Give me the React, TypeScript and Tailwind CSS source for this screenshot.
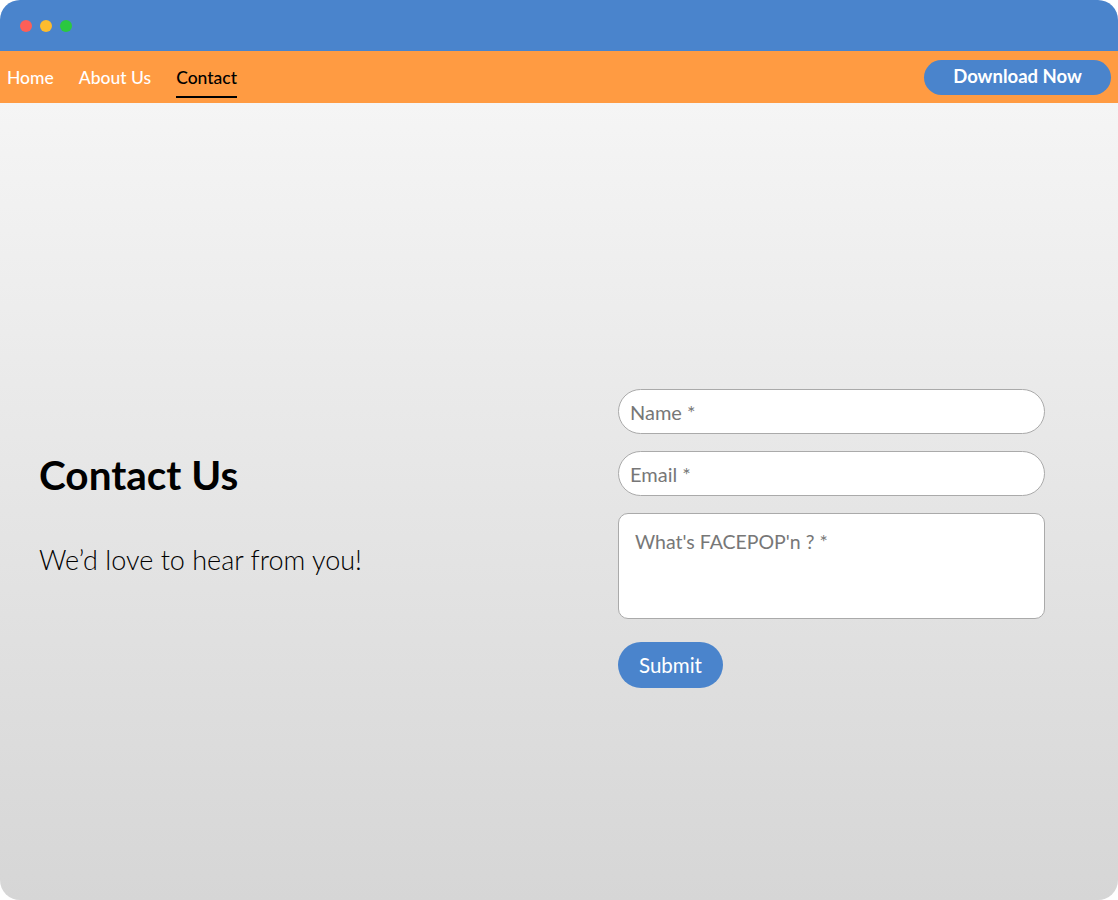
import React from 'react';

const font = { fontFamily: 'Lato, "Noto Sans", sans-serif' };

const NavLink: React.FC<{ label: string; active?: boolean }> = ({ label, active }) => (
  <a
    href="#"
    className={
      active
        ? 'text-black border-b-2 border-black pb-[5px] mt-[9px]'
        : 'text-white pb-[5px] mt-[9px] border-b-2 border-transparent'
    }
  >
    {label}
  </a>
);

const App: React.FC = () => {
  return (
    <div className="w-[1118px] h-[900px] bg-white" style={font}>
      <div className="h-full rounded-[20px] overflow-hidden flex flex-col">
        {/* Title bar */}
        <div className="h-[51px] bg-[#4a84cc] flex items-center gap-2 pl-5 shrink-0">
          <span className="w-3 h-3 rounded-full bg-[#fd5f57]" />
          <span className="w-3 h-3 rounded-full bg-[#fdbc2e]" />
          <span className="w-3 h-3 rounded-full bg-[#2bc840]" />
        </div>

        {/* Nav */}
        <div className="h-[52px] bg-[#ff9b42] flex items-center justify-between pl-[7px] pr-[7px] shrink-0">
          <nav className="flex items-center gap-[25px] text-[17.5px] font-medium">
            <NavLink label="Home" />
            <NavLink label="About Us" />
            <NavLink label="Contact" active />
          </nav>
          <button className="w-[187px] h-[35px] rounded-full bg-[#4a84cc] text-white font-bold text-[18.5px]">
            Download Now
          </button>
        </div>

        {/* Content */}
        <div className="flex-1 bg-gradient-to-b from-[#f5f5f5] to-[#d6d6d6] flex pt-[286px]">
          <div className="w-[618px] pl-[39px] pt-[61px]">
            <h1 className="text-[40.5px] font-bold text-black leading-tight">Contact Us</h1>
            <p className="text-[27px] font-light text-black mt-[39px]">We’d love to hear from you!</p>
          </div>
          <form className="w-[427px] flex flex-col">
            <input
              placeholder="Name *"
              className="h-[45px] rounded-full bg-white border border-[#aaaaaa] px-[11px] text-[20px] placeholder:text-[#777777] outline-none"
            />
            <input
              placeholder="Email *"
              className="h-[45px] mt-[17px] rounded-full bg-white border border-[#aaaaaa] px-[11px] text-[20px] placeholder:text-[#777777] outline-none"
            />
            <textarea
              placeholder="What's FACEPOP'n ? *"
              className="h-[106px] mt-[17px] rounded-[10px] bg-white border border-[#aaaaaa] px-4 py-[13px] text-[19.5px] placeholder:text-[#777777] outline-none resize-none"
            />
            <button
              type="button"
              className="w-[105px] h-[46px] mt-[23px] rounded-full bg-[#4a84cc] text-white text-[20.5px]"
            >
              Submit
            </button>
          </form>
        </div>
      </div>
    </div>
  );
};

export default App;
